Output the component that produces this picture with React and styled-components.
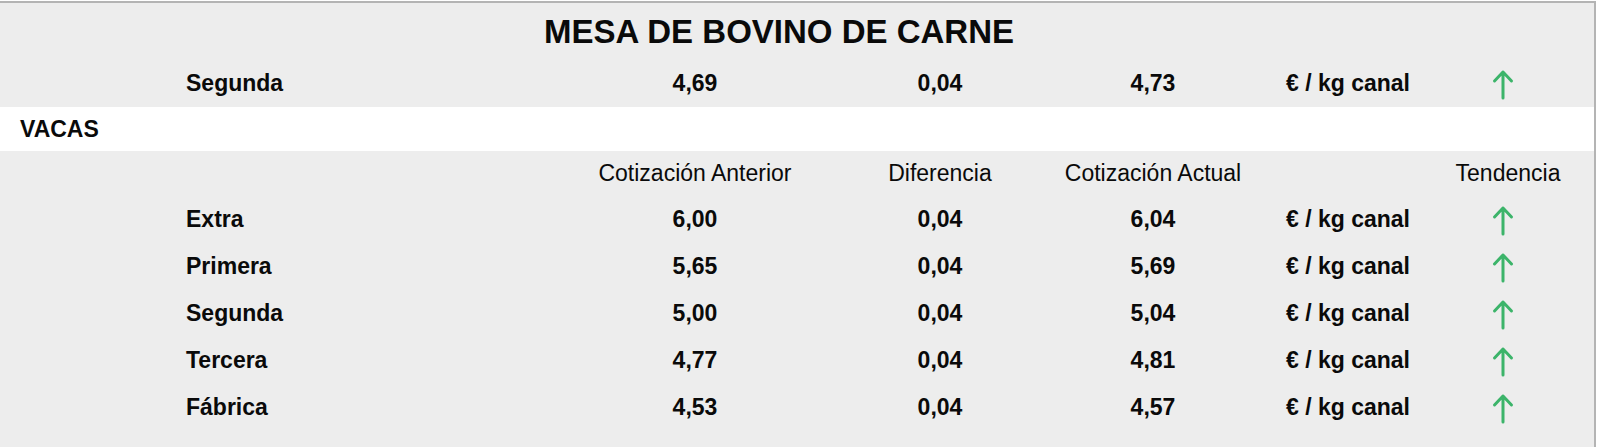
import React from "react";
import styled, { createGlobalStyle } from "styled-components";

const Global = createGlobalStyle`
  html, body { margin: 0; padding: 0; background: #ffffff; }
  body { font-family: "Liberation Sans", Arial, sans-serif; color: #0a0a0a; }
`;

const Frame = styled.div`
  width: 1594px;
  height: 445px;
  border-top: 2px solid #b4b4b4;
  border-right: 2px solid #b4b4b4;
  background: #ededed;
  overflow: hidden;
  margin-top: 1px;
`;

const Title = styled.div`
  height: 57px;
  display: flex;
  align-items: center;
  justify-content: center;
  font-weight: 700;
  font-size: 33px;
  padding-right: 36px;
  box-sizing: border-box;
`;

const Row = styled.div`
  display: grid;
  grid-template-columns: 186px 374px 270px 220px 206px 184px 136px;
  align-items: center;
  height: ${(p) => p.h || 47}px;
  background: ${(p) => (p.white ? "#ffffff" : "#ededed")};
  font-size: 23px;
  font-weight: ${(p) => (p.bold ? 700 : 400)};
`;

const Cell = styled.div`
  text-align: ${(p) => p.align || "center"};
  white-space: nowrap;
`;

const Section = styled.div`
  grid-column: 1 / -1;
  padding-left: 20px;
  font-weight: 700;
`;

const ArrowCell = styled.div`
  display: flex;
  justify-content: center;
  padding-right: 10px;
`;

const UpArrow = () => (
  <svg width="22" height="32" viewBox="0 0 22 32" fill="none">
    <path
      d="M11 30 V4 M2.5 13 L11 4 L19.5 13"
      stroke="#3cb46a"
      strokeWidth="3"
      strokeLinecap="round"
      strokeLinejoin="round"
    />
  </svg>
);

const DataRow = ({ name, a, d, c }) => (
  <Row bold>
    <span />
    <Cell align="left">{name}</Cell>
    <Cell>{a}</Cell>
    <Cell>{d}</Cell>
    <Cell>{c}</Cell>
    <Cell>€ / kg canal</Cell>
    <ArrowCell>
      <UpArrow />
    </ArrowCell>
  </Row>
);

const rows = [
  { name: "Extra", a: "6,00", d: "0,04", c: "6,04" },
  { name: "Primera", a: "5,65", d: "0,04", c: "5,69" },
  { name: "Segunda", a: "5,00", d: "0,04", c: "5,04" },
  { name: "Tercera", a: "4,77", d: "0,04", c: "4,81" },
  { name: "Fábrica", a: "4,53", d: "0,04", c: "4,57" },
];

export default function App() {
  return (
    <>
      <Global />
      <Frame>
        <Title>MESA DE BOVINO DE CARNE</Title>
        <DataRow name="Segunda" a="4,69" d="0,04" c="4,73" />
        <Row white bold h={44}>
          <Section>VACAS</Section>
        </Row>
        <Row h={45}>
          <span />
          <span />
          <Cell>Cotización Anterior</Cell>
          <Cell>Diferencia</Cell>
          <Cell>Cotización Actual</Cell>
          <span />
          <Cell>Tendencia</Cell>
        </Row>
        {rows.map((r) => (
          <DataRow key={r.name} {...r} />
        ))}
      </Frame>
    </>
  );
}
